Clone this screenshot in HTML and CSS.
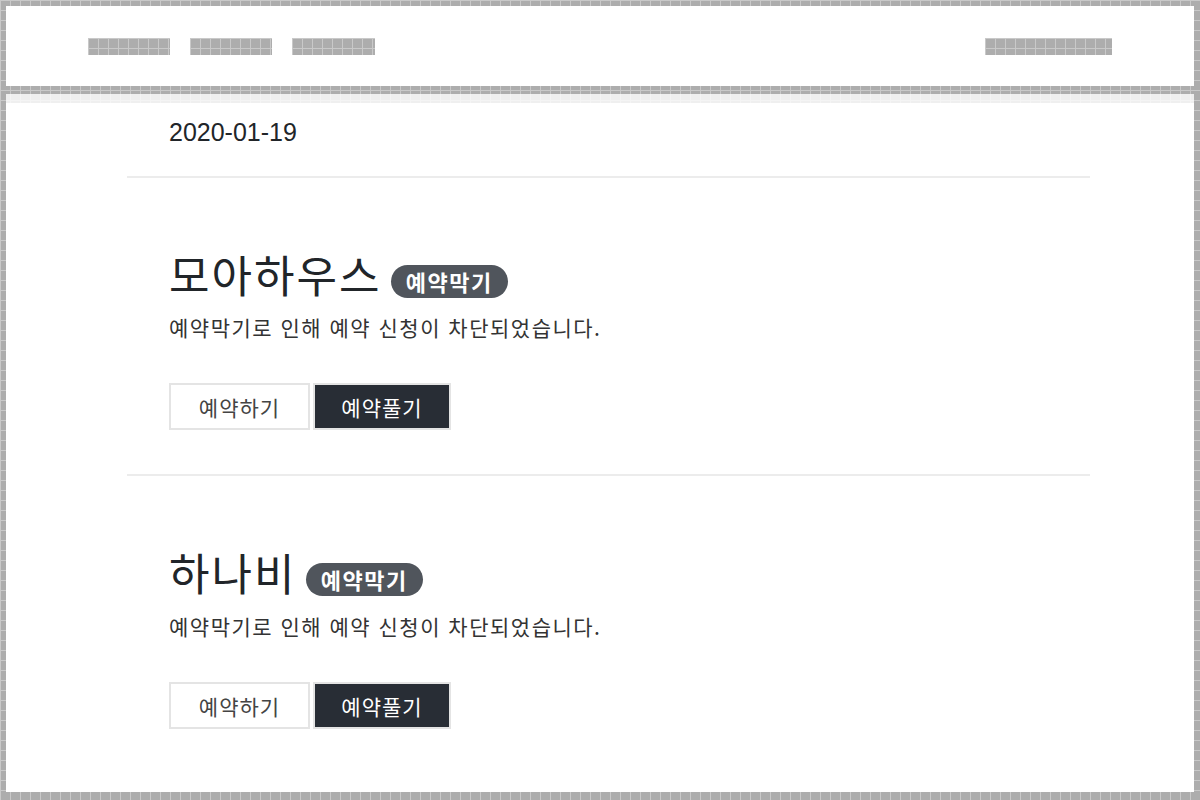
FILE: index.html
```html
<!DOCTYPE html>
<html lang="ko">
<head>
  <meta charset="UTF-8" />
  <meta name="viewport" content="width=device-width, initial-scale=1.0"/>
  <title>예약 관리</title>
  <link rel="stylesheet" href="styles.css">
</head>
<body>

<div class="frame">
  <header class="topbar">
    <nav class="menu">
      <span class="redact w82"></span>
      <span class="redact w82"></span>
      <span class="redact w83"></span>
    </nav>
    <span class="redact w127"></span>
  </header>

  <div class="strip"></div>

  <main class="content">
    <div class="wrap">
      <div class="date">2020-01-19</div>
      <hr>

      <section class="shop">
        <h2 class="shop-title">모아하우스 <span class="badge">예약막기</span></h2>
        <p class="shop-desc">예약막기로 인해 예약 신청이 차단되었습니다.</p>
        <div class="btn-group">
          <button class="btn btn-light">예약하기</button>
          <button class="btn btn-dark">예약풀기</button>
        </div>
      </section>
      <hr>

      <section class="shop">
        <h2 class="shop-title">하나비 <span class="badge">예약막기</span></h2>
        <p class="shop-desc">예약막기로 인해 예약 신청이 차단되었습니다.</p>
        <div class="btn-group">
          <button class="btn btn-light">예약하기</button>
          <button class="btn btn-dark">예약풀기</button>
        </div>
      </section>
    </div>
  </main>
</div>

</body>
</html>
```

FILE: styles.css
```css
body {
  margin: 0;
  font-family: "Noto Sans CJK KR", "Noto Sans", sans-serif;
  color: #212529;
  background-color: #adadad;
  background-image:
    linear-gradient(90deg, #c9c9c9 1px, transparent 1px),
    linear-gradient(#c9c9c9 1px, transparent 1px);
  background-size: 10px 10px;
}

.frame {
  height: 800px;
  padding: 6px 6px 8px 6px;
  box-sizing: border-box;
  display: flex;
  flex-direction: column;
}

/* header with hidden nav */
.topbar {
  height: 80px;
  background: #fff;
  display: flex;
  align-items: center;
  justify-content: space-between;
  padding: 0 82px;
}

.menu {
  display: flex;
  gap: 20px;
}

.redact {
  display: block;
  height: 17px;
  background-color: #adadad;
  background-image:
    linear-gradient(90deg, #c9c9c9 1px, transparent 1px),
    linear-gradient(#c9c9c9 1px, transparent 1px);
  background-size: 10px 10px;
}

.w82 { width: 82px; }
.w83 { width: 83px; }
.w127 { width: 127px; }

.strip {
  height: 9px;
  margin-top: 8px;
  background: rgba(255, 255, 255, 0.8);
}

.content {
  flex: 1;
  background: #fff;
  overflow: hidden;
}

.wrap {
  width: 963px;
  margin-left: 121px;
}

.date {
  font-family: "Liberation Sans", Arial, sans-serif;
  font-size: 25px;
  line-height: 1.5;
  padding: 11px 0 0 42px;
}

hr {
  border: 0;
  border-top: 2px solid #ececec;
  margin: 24px 0 0 0;
}

.shop {
  padding: 70px 0 0 42px;
}

.shop + hr {
  margin-top: 44px;
}

.shop-title {
  margin: 0;
  font-size: 44px;
  font-weight: 400;
  line-height: 1.2;
  letter-spacing: 2px;
}

.badge {
  display: inline-block;
  vertical-align: 2px;
  margin-left: -5px;
  background: #50555c;
  color: #fff;
  font-size: 22px;
  font-weight: 700;
  line-height: 1;
  letter-spacing: 1.5px;
  padding: 5px 15px 6px 15px;
  border-radius: 20px;
}

.shop-desc {
  margin: 12px 0 0 0;
  font-size: 21px;
  letter-spacing: 1.5px;
  color: #333;
}

.btn-group {
  display: flex;
  gap: 3px;
  margin-top: 41px;
}

.btn {
  font-family: "Noto Sans CJK KR", "Noto Sans", sans-serif;
  font-size: 21px;
  letter-spacing: 1px;
  height: 47px;
  border: 2px solid #e4e4e4;
  background: #fff;
  color: #444;
  cursor: pointer;
}

.btn-light {
  width: 141px;
}

.btn-dark {
  width: 138px;
  background: #282d35;
  border-color: #e4e4e4;
  color: #fff;
}
```
